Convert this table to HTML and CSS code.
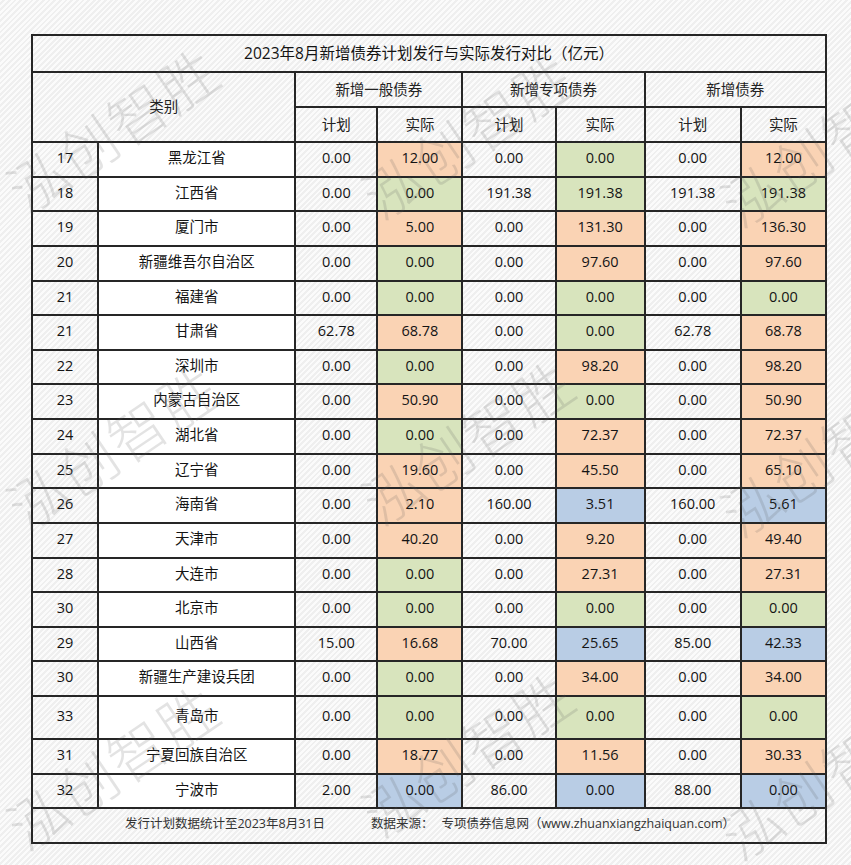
FILE: index.html
```html
<!DOCTYPE html>
<html lang="zh-CN">
<head>
<meta charset="utf-8">
<title>2023年8月新增债券计划发行与实际发行对比</title>
<link rel="stylesheet" href="styles.css">
</head>
<body>
<div class="page">
  <table class="sheet">
    <colgroup>
      <col class="c-no"><col class="c-name"><col class="c-p1"><col class="c-a1"><col class="c-p2"><col class="c-a2"><col class="c-p3"><col class="c-a3">
    </colgroup>
    <thead>
      <tr class="r-title"><th colspan="8">2023年8月新增债券计划发行与实际发行对比（亿元）</th></tr>
      <tr class="r-head"><th colspan="2" rowspan="2">类别</th><th colspan="2">新增一般债券</th><th colspan="2">新增专项债券</th><th colspan="2">新增债券</th></tr>
      <tr class="r-head"><th>计划</th><th>实际</th><th>计划</th><th>实际</th><th>计划</th><th>实际</th></tr>
    </thead>
    <tbody>
      <tr><td>17</td><td class="name">黑龙江省</td><td>0.00</td><td class="o">12.00</td><td>0.00</td><td class="g">0.00</td><td>0.00</td><td class="o">12.00</td></tr>
      <tr><td>18</td><td class="name">江西省</td><td>0.00</td><td class="g">0.00</td><td>191.38</td><td class="g">191.38</td><td>191.38</td><td class="g">191.38</td></tr>
      <tr><td>19</td><td class="name">厦门市</td><td>0.00</td><td class="o">5.00</td><td>0.00</td><td class="o">131.30</td><td>0.00</td><td class="o">136.30</td></tr>
      <tr><td>20</td><td class="name">新疆维吾尔自治区</td><td>0.00</td><td class="g">0.00</td><td>0.00</td><td class="o">97.60</td><td>0.00</td><td class="o">97.60</td></tr>
      <tr><td>21</td><td class="name">福建省</td><td>0.00</td><td class="g">0.00</td><td>0.00</td><td class="g">0.00</td><td>0.00</td><td class="g">0.00</td></tr>
      <tr><td>21</td><td class="name">甘肃省</td><td>62.78</td><td class="o">68.78</td><td>0.00</td><td class="g">0.00</td><td>62.78</td><td class="o">68.78</td></tr>
      <tr><td>22</td><td class="name">深圳市</td><td>0.00</td><td class="g">0.00</td><td>0.00</td><td class="o">98.20</td><td>0.00</td><td class="o">98.20</td></tr>
      <tr><td>23</td><td class="name">内蒙古自治区</td><td>0.00</td><td class="o">50.90</td><td>0.00</td><td class="g">0.00</td><td>0.00</td><td class="o">50.90</td></tr>
      <tr><td>24</td><td class="name">湖北省</td><td>0.00</td><td class="g">0.00</td><td>0.00</td><td class="o">72.37</td><td>0.00</td><td class="o">72.37</td></tr>
      <tr><td>25</td><td class="name">辽宁省</td><td>0.00</td><td class="o">19.60</td><td>0.00</td><td class="o">45.50</td><td>0.00</td><td class="o">65.10</td></tr>
      <tr><td>26</td><td class="name">海南省</td><td>0.00</td><td class="o">2.10</td><td>160.00</td><td class="b">3.51</td><td>160.00</td><td class="b">5.61</td></tr>
      <tr><td>27</td><td class="name">天津市</td><td>0.00</td><td class="o">40.20</td><td>0.00</td><td class="o">9.20</td><td>0.00</td><td class="o">49.40</td></tr>
      <tr><td>28</td><td class="name">大连市</td><td>0.00</td><td class="g">0.00</td><td>0.00</td><td class="o">27.31</td><td>0.00</td><td class="o">27.31</td></tr>
      <tr><td>30</td><td class="name">北京市</td><td>0.00</td><td class="g">0.00</td><td>0.00</td><td class="g">0.00</td><td>0.00</td><td class="g">0.00</td></tr>
      <tr><td>29</td><td class="name">山西省</td><td>15.00</td><td class="o">16.68</td><td>70.00</td><td class="b">25.65</td><td>85.00</td><td class="b">42.33</td></tr>
      <tr><td>30</td><td class="name">新疆生产建设兵团</td><td>0.00</td><td class="g">0.00</td><td>0.00</td><td class="o">34.00</td><td>0.00</td><td class="o">34.00</td></tr>
      <tr class="tall"><td>33</td><td class="name">青岛市</td><td>0.00</td><td class="g">0.00</td><td>0.00</td><td class="g">0.00</td><td>0.00</td><td class="g">0.00</td></tr>
      <tr><td>31</td><td class="name">宁夏回族自治区</td><td>0.00</td><td class="o">18.77</td><td>0.00</td><td class="o">11.56</td><td>0.00</td><td class="o">30.33</td></tr>
      <tr><td>32</td><td class="name">宁波市</td><td>2.00</td><td class="b">0.00</td><td>86.00</td><td class="b">0.00</td><td>88.00</td><td class="b">0.00</td></tr>
    </tbody>
    <tfoot>
      <tr class="r-foot"><td colspan="8"><span class="note">发行计划数据统计至2023年8月31日</span><span class="src">数据来源：<span class="site">专项债券信息网（www.zhuanxiangzhaiquan.com）</span></span></td></tr>
    </tfoot>
  </table>

  <div class="marks" aria-hidden="true">
    <span class="mark m1">泓创智胜</span>
    <span class="mark m2">泓创智胜</span>
    <span class="mark m3">泓创智胜</span>
    <span class="mark m4">泓创智胜</span>
    <span class="mark m5">泓创智胜</span>
    <span class="mark m6">泓创智胜</span>
    <span class="mark m7">泓创智胜</span>
    <span class="mark m8">泓创智胜</span>
    <span class="mark m9">泓创智胜</span>
  </div>
</div>
</body>
</html>
```

FILE: styles.css
```css
html, body {
  margin: 0;
  padding: 0;
}
html {
  background: repeating-linear-gradient(135deg, #fbfbfb 0 2px, #efefef 2px 4px);
}
.page {
  position: relative;
  width: 851px;
  height: 865px;
  overflow: hidden;
  padding-top: 34px;
  box-sizing: border-box;
  font-family: "Open Sans", "Noto Sans CJK SC", sans-serif;
  color: #141414;
}
.sheet {
  margin-left: 31px;
  width: 796px;
  table-layout: fixed;
  border-collapse: collapse;
  font-size: 14.5px;
}
.c-no { width: 66px; }
.c-name { width: 197px; }
.c-p1 { width: 82px; }
.c-a1 { width: 85px; }
.c-p2 { width: 93px; }
.c-a2 { width: 89px; }
.c-p3 { width: 96px; }
.c-a3 { width: 85px; }

.sheet th, .sheet td {
  border: 2px solid #262626;
  padding: 0;
  text-align: center;
  vertical-align: middle;
  font-weight: 400;
  white-space: nowrap;
  line-height: 1.2;
}
.r-title { height: 37px; }
.r-title th { font-size: 15.5px; padding-bottom: 1px; }
.r-head { height: 35px; }
.r-head th { color: #222; }
.sheet tbody tr { height: 34.63px; }
.sheet tbody tr.tall { height: 43px; }
.sheet tbody td { padding-bottom: 3px; }
.sheet td.name { background: #ffffff; }
.sheet td.o { background: #fad3b4; }
.sheet td.g { background: #d8e4bd; }
.sheet td.b { background: #b9cde5; }

.r-foot { height: 35px; }
.r-foot td {
  font-size: 12.5px;
  color: #333;
  padding-bottom: 4px;
}
.note { margin-right: 46px; margin-left: 2px; }
.site { margin-left: 8px; }

.marks {
  position: absolute;
  inset: 0;
  pointer-events: none;
}
.mark {
  position: absolute;
  transform: translate(-50%, -50%) rotate(-34deg);
  font-family: "Noto Sans CJK SC", sans-serif;
  font-weight: 300;
  font-size: 58px;
  letter-spacing: 2px;
  color: rgba(90, 90, 90, 0.17);
  white-space: nowrap;
}
.m1 { left: 112px; top: 128px; }
.m2 { left: 467px; top: 134px; }
.m3 { left: 826px; top: 142px; }
.m4 { left: 112px; top: 445px; }
.m5 { left: 467px; top: 440px; }
.m6 { left: 826px; top: 452px; }
.m7 { left: 112px; top: 765px; }
.m8 { left: 467px; top: 752px; }
.m9 { left: 826px; top: 775px; }
```
